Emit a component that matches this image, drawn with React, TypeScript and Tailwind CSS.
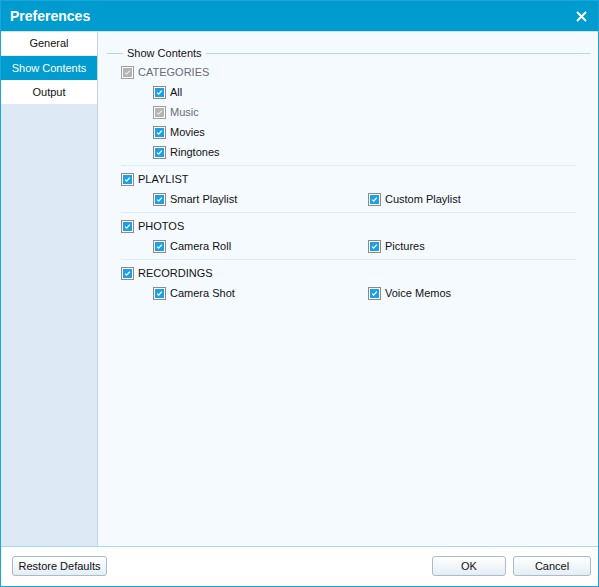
import React from "react";

function Box({ disabled }: { disabled?: boolean }) {
  return (
    <span
      className={`flex h-[13px] w-[13px] shrink-0 items-center justify-center border ${
        disabled ? "border-[#a0a0a0]" : "border-[#8a8a8a]"
      } bg-white`}
    >
      <span
        className={`flex h-[9px] w-[9px] items-center justify-center ${
          disabled ? "bg-[#b4b4b4]" : "bg-[#1ea0e6]"
        }`}
      >
        <svg width="7" height="7" viewBox="0 0 7 7">
          <path
            d="M1.2 3.6 L2.7 5.1 L5.8 1.6"
            fill="none"
            stroke={disabled ? "#e8e8e8" : "#ffffff"}
            strokeWidth="1.3"
          />
        </svg>
      </span>
    </span>
  );
}

function Item({ label, disabled }: { label: string; disabled?: boolean }) {
  return (
    <div className="flex h-[20px] items-center gap-[4px]">
      <Box disabled={disabled} />
      <span className={disabled ? "text-[#6a6a78]" : "text-[#111]"}>{label}</span>
    </div>
  );
}

function Sep() {
  return <div className="my-[3px] mr-[14px] h-px bg-[#dbeef6]" />;
}

function Group({
  title,
  items,
}: {
  title: string;
  items: [string, string];
}) {
  return (
    <div>
      <Item label={title} />
      <div className="grid grid-cols-[215px_1fr] pl-[32px]">
        <Item label={items[0]} />
        <Item label={items[1]} />
      </div>
    </div>
  );
}

function Btn({ label, w }: { label: string; w: string }) {
  return (
    <button
      className={`${w} h-[20px] rounded-[3px] border border-[#a9bccb] bg-gradient-to-b from-white to-[#e4eef5] text-[11px] text-[#111]`}
    >
      {label}
    </button>
  );
}

export default function App() {
  return (
    <div
      className="flex h-[587px] w-[599px] flex-col border border-[#1aa6dc] bg-white text-[11px]"
      style={{ fontFamily: '"Liberation Sans", Arial, sans-serif' }}
    >
      <div className="flex h-[30px] shrink-0 items-center justify-between bg-[#009bcf] pl-[9px] pr-[11px]">
        <span className="text-[14px] font-bold text-white">Preferences</span>
        <svg width="11" height="11" viewBox="0 0 11 11">
          <path d="M1 1 L10 10 M10 1 L1 10" stroke="white" strokeWidth="2" />
        </svg>
      </div>
      <div className="flex min-h-0 flex-1 border-t border-[#c8e6f2]">
        <div className="flex w-[97px] shrink-0 flex-col border-r border-[#c3d3e3] bg-[#dde9f5]">
          <div className="flex h-[24px] items-center justify-center border-b border-[#e4ecf3] bg-white text-[#111]">
            General
          </div>
          <div className="flex h-[24px] items-center justify-center bg-[#009bcf] text-white">
            Show Contents
          </div>
          <div className="flex h-[24px] items-center justify-center bg-white text-[#111]">
            Output
          </div>
        </div>
        <div className="flex-1 bg-[#f5faff] pl-[9px] pr-[8px] pt-[14px]">
          <div className="mb-[2px] flex h-[14px] items-center">
            <div className="h-px w-[16px] bg-[#b3dbe6]" />
            <span className="px-[4px] text-[#111]">Show Contents</span>
            <div className="h-px flex-1 bg-[#b3dbe6]" />
          </div>
          <div className="pl-[14px]">
            <Item label="CATEGORIES" disabled />
            <div className="pl-[32px]">
              <Item label="All" />
              <Item label="Music" disabled />
              <Item label="Movies" />
              <Item label="Ringtones" />
            </div>
            <Sep />
            <Group title="PLAYLIST" items={["Smart Playlist", "Custom Playlist"]} />
            <Sep />
            <Group title="PHOTOS" items={["Camera Roll", "Pictures"]} />
            <Sep />
            <Group title="RECORDINGS" items={["Camera Shot", "Voice Memos"]} />
          </div>
        </div>
      </div>
      <div className="flex h-[40px] shrink-0 items-center justify-between border-t border-[#a6dcef] bg-white pl-[11px] pr-[7px] pb-[1px]">
        <Btn label="Restore Defaults" w="w-[95px]" />
        <div className="flex gap-[7px]">
          <Btn label="OK" w="w-[74px]" />
          <Btn label="Cancel" w="w-[78px]" />
        </div>
      </div>
    </div>
  );
}
